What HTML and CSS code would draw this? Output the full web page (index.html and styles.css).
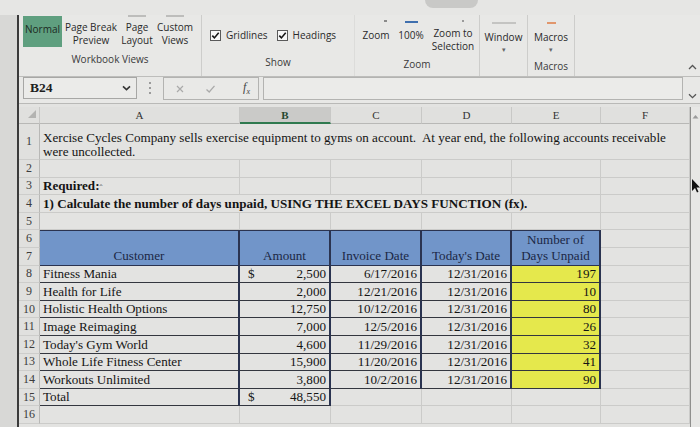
FILE: index.html
```html
<!DOCTYPE html>
<html lang="en">
<head>
<meta charset="utf-8">
<title>Accounts Receivable - Excel</title>
<link rel="stylesheet" href="styles.css">
</head>
<body>
<div class="top"><div class="tabhint"></div></div>
<div class="main">
  <div class="bezel"></div>
  <div class="app">
    <div class="ribbon">
      <div class="group g-views">
        <div class="btns">
          <div class="btn normal">Normal</div>
          <div class="btn w-pb"><span class="ico ico-none"></span>Page Break<br>Preview</div>
          <div class="btn w-pl"><span class="ico ico-dash"></span>Page<br>Layout</div>
          <div class="btn w-cv"><span class="ico ico-dash"></span>Custom<br>Views</div>
        </div>
        <div class="glabel">Workbook Views</div>
      </div>
      <div class="group g-show">
        <div class="btns">
          <label class="chk"><svg width="11" height="11" viewBox="0 0 11 11"><rect x="0.5" y="0.5" width="10" height="10" fill="#f7f7f7" stroke="#5a5a5a"/><path d="M2.3 5.6 L4.4 7.9 L8.7 2.7" fill="none" stroke="#151515" stroke-width="1.6"/></svg><span>Gridlines</span></label>
          <label class="chk"><svg width="11" height="11" viewBox="0 0 11 11"><rect x="0.5" y="0.5" width="10" height="10" fill="#f7f7f7" stroke="#5a5a5a"/><path d="M2.3 5.6 L4.4 7.9 L8.7 2.7" fill="none" stroke="#151515" stroke-width="1.6"/></svg><span>Headings</span></label>
        </div>
        <div class="glabel">Show</div>
      </div>
      <div class="group g-zoom">
        <div class="btns">
          <div class="btn w-z"><span class="ico ico-dot"></span>Zoom</div>
          <div class="btn w-100"><span class="ico ico-blue"></span>100%</div>
          <div class="btn w-zs"><span class="ico ico-dot2"></span>Zoom to<br>Selection</div>
        </div>
        <div class="glabel">Zoom</div>
      </div>
      <div class="group g-window">
        <div class="btns">
          <div class="btn w-win"><span class="ico ico-win"></span>Window<span class="drop">&#9662;</span></div>
        </div>
      </div>
      <div class="group g-macros">
        <div class="btns">
          <div class="btn w-mac"><span class="ico ico-orange"></span>Macros<span class="drop">&#9662;</span></div>
        </div>
        <div class="glabel">Macros</div>
      </div>
      <div class="ribbon-end">
        <svg width="9" height="6" viewBox="0 0 9 6"><path d="M1 5 L4.5 1.5 L8 5" fill="none" stroke="#555" stroke-width="1.3"/></svg>
      </div>
    </div>

    <div class="fbar">
      <div class="namebox"><span>B24</span><svg width="9" height="6" viewBox="0 0 9 6"><path d="M1 1.3 L4.5 4.6 L8 1.3" fill="none" stroke="#333" stroke-width="1.6"/></svg></div>
      <div class="grip"><i></i><i></i><i></i></div>
      <div class="fxbox">
        <svg width="10" height="10" viewBox="0 0 10 10"><path d="M2 2 L8 8 M8 2 L2 8" stroke="#aaa" stroke-width="1.2"/></svg>
        <svg width="11" height="10" viewBox="0 0 11 10"><path d="M1.5 5.5 L4.2 8 L9.5 1.8" fill="none" stroke="#aaa" stroke-width="1.3"/></svg>
        <span class="fx">f<sub>x</sub></span>
      </div>
      <div class="finput"></div>
      <div class="fend"><svg width="9" height="6" viewBox="0 0 9 6"><path d="M1 1.3 L4.5 4.6 L8 1.3" fill="none" stroke="#555" stroke-width="1.3"/></svg></div>
    </div>

    <div class="sheetwrap">
      <div class="sheet">
        <div class="ch corner"><svg width="8" height="8" viewBox="0 0 8 8"><path d="M8 0 L8 8 L0 8 Z" fill="#b3b3b1"/></svg></div>
        <div class="ch">A</div>
        <div class="ch sel">B</div>
        <div class="ch">C</div>
        <div class="ch">D</div>
        <div class="ch">E</div>
        <div class="ch">F</div>

        <div class="rh">1</div>
        <div class="c span6 intro">Xercise Cycles Company sells exercise equipment to gyms on account.&nbsp; At year end, the following accounts receivable<br>were uncollected.</div>

        <div class="rh">2</div>
        <div class="c"></div><div class="c"></div><div class="c"></div><div class="c"></div><div class="c"></div><div class="c"></div>

        <div class="rh">3</div>
        <div class="c bold">Required:<span class="caret">&#710;</span></div>
        <div class="c"></div><div class="c"></div><div class="c"></div><div class="c"></div><div class="c"></div>

        <div class="rh">4</div>
        <div class="c span5 bold">1) Calculate the number of days unpaid, USING THE EXCEL DAYS FUNCTION (fx).</div>
        <div class="c"></div>

        <div class="rh">5</div>
        <div class="c"></div><div class="c"></div><div class="c"></div><div class="c"></div><div class="c"></div><div class="c"></div>

        <div class="c th cA">Customer</div>
        <div class="c th cB">Amount</div>
        <div class="c th cC">Invoice Date</div>
        <div class="c th cD">Today's Date</div>
        <div class="c th cE">Number of<br>Days Unpaid</div>
        <div class="rh">6</div>
        <div class="c"></div>
        <div class="rh">7</div>
        <div class="c"></div>

        <div class="rh">8</div>
        <div class="c td tv">Fitness Mania</div>
        <div class="c td tv amt"><span>$</span><span>2,500</span></div>
        <div class="c td tv num">6/17/2016</div>
        <div class="c td tv num">12/31/2016</div>
        <div class="c td tv num yel">197</div>
        <div class="c"></div>

        <div class="rh">9</div>
        <div class="c td tv">Health for Life</div>
        <div class="c td tv amt"><span></span><span>2,000</span></div>
        <div class="c td tv num">12/21/2016</div>
        <div class="c td tv num">12/31/2016</div>
        <div class="c td tv num yel">10</div>
        <div class="c"></div>

        <div class="rh">10</div>
        <div class="c td tv">Holistic Health Options</div>
        <div class="c td tv amt"><span></span><span>12,750</span></div>
        <div class="c td tv num">10/12/2016</div>
        <div class="c td tv num">12/31/2016</div>
        <div class="c td tv num yel">80</div>
        <div class="c"></div>

        <div class="rh">11</div>
        <div class="c td tv">Image Reimaging</div>
        <div class="c td tv amt"><span></span><span>7,000</span></div>
        <div class="c td tv num">12/5/2016</div>
        <div class="c td tv num">12/31/2016</div>
        <div class="c td tv num yel">26</div>
        <div class="c"></div>

        <div class="rh">12</div>
        <div class="c td tv">Today's Gym World</div>
        <div class="c td tv amt"><span></span><span>4,600</span></div>
        <div class="c td tv num">11/29/2016</div>
        <div class="c td tv num">12/31/2016</div>
        <div class="c td tv num yel">32</div>
        <div class="c"></div>

        <div class="rh">13</div>
        <div class="c td tv">Whole Life Fitness Center</div>
        <div class="c td tv amt"><span></span><span>15,900</span></div>
        <div class="c td tv num">11/20/2016</div>
        <div class="c td tv num">12/31/2016</div>
        <div class="c td tv num yel">41</div>
        <div class="c"></div>

        <div class="rh">14</div>
        <div class="c td tv">Workouts Unlimited</div>
        <div class="c td tv amt"><span></span><span>3,800</span></div>
        <div class="c td tv num">10/2/2016</div>
        <div class="c td tv num">12/31/2016</div>
        <div class="c td tv num yel">90</div>
        <div class="c"></div>

        <div class="rh">15</div>
        <div class="c td tv">Total</div>
        <div class="c td tv amt"><span>$</span><span>48,550</span></div>
        <div class="c"></div><div class="c"></div><div class="c"></div><div class="c"></div>

        <div class="rh">16</div>
        <div class="c"></div><div class="c"></div><div class="c"></div><div class="c"></div><div class="c"></div><div class="c"></div>
      </div>
      <div class="vscroll"><svg width="7" height="5" viewBox="0 0 7 5"><path d="M0.5 4.5 L3.5 1 L6.5 4.5 Z" fill="#9a9a9a"/></svg></div>
    </div>
  </div>
</div>
<svg class="cursor" width="8" height="14" viewBox="0 0 8 14"><path d="M0 0 L0 12 L3 9 L5 13.5 L6.5 12.8 L4.5 8.5 L8 8.5 Z" fill="#111"/></svg>
</body>
</html>
```

FILE: styles.css
```css
* { box-sizing: border-box; margin: 0; padding: 0; }
html, body { width: 700px; height: 427px; overflow: hidden; }
body {
  position: relative;
  background: #e3e3e1;
  font-family: "Liberation Serif", "Times New Roman", serif;
  color: #1c1c1c;
}

.top { height: 15px; background: #e6e6e4; padding-left: 425px; }
.tabhint { width: 53px; height: 8px; background: #c9c9c7; border-radius: 0 0 9px 9px; }

.main { display: flex; height: 412px; }
.bezel { width: 17px; flex: none; background: #d8d8d6; }
.app { flex: 1; display: flex; flex-direction: column; border-left: 2px solid #3a3a3a; min-width: 0; }

/* Ribbon */
.ribbon {
  height: 62px; display: flex; background: #e8e8e6;
  border-bottom: 1px solid #bdbdbb;
  font-family: "Open Sans", "Noto Sans", sans-serif; font-size: 10px; color: #2a2a2a;
}
.group { display: flex; flex-direction: column; align-items: center; border-right: 1px solid #cdcdcb; }
.glabel { line-height: 13px; color: #3a3a3a; white-space: nowrap; }
.btns { display: flex; align-items: flex-start; width: 100%; }
.btn { display: flex; flex-direction: column; align-items: center; text-align: center; line-height: 13px; white-space: nowrap; }
.ico { display: block; height: 2px; flex: none; }

.g-views { width: 183px; }
.g-views .btns { height: 37.5px; padding-left: 4px; }
.normal { width: 39px; height: 31px; margin-top: 1px; background: #5f9f7f; justify-content: center; padding-bottom: 4px; color: #1d2a22; }
.w-pb { width: 56px; margin-left: 1px; }
.w-pl { width: 36px; }
.w-cv { width: 40px; }
.g-views .ico { margin-bottom: 4px; }
.ico-none { width: 1px; }
.ico-dash { width: 18px; background: #bdbdbb; }

.g-show { width: 153px; border-right-color: #dcdcda; }
.g-show .btns { height: 40.5px; padding: 13.5px 0 0 8px; }
.chk { display: flex; align-items: center; gap: 5px; line-height: 13px; }
.chk + .chk { margin-left: 9px; }
.chk svg { display: block; }

.g-zoom { width: 125px; }
.g-zoom .btns { height: 42.5px; padding-left: 5px; }
.w-z { width: 32px; padding-top: 5px; }
.w-z .ico { margin-bottom: 6.5px; }
.ico-dot { width: 3px; background: #8a8a8a; margin-left: 18px; }
.w-100 { width: 38px; padding-top: 6px; }
.w-100 .ico { margin-bottom: 5.5px; }
.ico-blue { width: 13px; background: #3f6fae; }
.w-zs { width: 46px; padding-top: 5px; }
.w-zs .ico { margin-bottom: 4.5px; }
.ico-dot2 { width: 2px; background: #9a9a9a; margin-left: 20px; }

.g-window { width: 48px; }
.g-window .btns, .g-macros .btns { height: 44.5px; }
.w-win, .w-mac { width: 100%; padding-top: 7px; }
.w-win .ico, .w-mac .ico { margin-bottom: 6.5px; }
.ico-win { width: 24px; background: #c4c4c2; }
.ico-orange { width: 9px; background: #e1976d; }
.drop { font-size: 7px; line-height: 9px; color: #666; margin-top: 1px; }
.g-macros { width: 47px; }

.ribbon-end { flex: 1; display: flex; justify-content: flex-end; align-items: flex-start; padding: 49px 3px 0 0; }
.ribbon-end svg { display: block; }

/* Formula bar */
.fbar {
  height: 27px; display: flex; align-items: flex-start; padding: 0 0 0 4px;
  background: #e8e8e6; border-bottom: 1px solid #b9b9b7;
}
.namebox {
  width: 114px; height: 22px; border: 1px solid #a7a7a5; background: #ebebe9;
  display: flex; align-items: center; justify-content: space-between; padding: 0 5px 0 6px;
  font-family: "Liberation Serif", serif; font-size: 13.5px; color: #1e1e1e; font-weight: bold;
}
.namebox svg { display: block; }
.grip { width: 26px; height: 22px; display: flex; flex-direction: column; align-items: center; justify-content: center; gap: 3px; }
.grip i { display: block; width: 2px; height: 2px; background: #9b9b9b; }
.fxbox {
  width: 96px; height: 23px; border: 1px solid #b3b3b1; background: #e9e9e7;
  display: flex; align-items: center; padding: 0 8px 0 11px; justify-content: space-between;
}
.fxbox svg { display: block; }
.fxbox svg + svg { margin-left: 4px; }
.fx { font-family: "Liberation Serif", serif; font-style: italic; font-size: 12px; color: #444; margin-left: 12px; }
.fx sub { font-size: 8px; }
.finput { width: 420px; height: 23px; margin-left: 4px; border: 1px solid #b3b3b1; background: #ebebe9; }
.fend { flex: 1; display: flex; justify-content: flex-end; padding: 16px 3px 0 0; }
.fend svg { display: block; }

/* Sheet */
.sheetwrap { display: flex; margin-top: 3px; flex: 1; min-height: 0; }
.sheet {
  width: 671px; flex: none; display: grid;
  grid-template-columns: 21px 200px 91px 91px 90px 89px 89px;
  grid-template-rows: 17px 36px repeat(15, 17.6px);
  background: #e3e3e1;
}
.ch {
  display: flex; align-items: center; justify-content: center;
  font-size: 11px; color: #333; background: #e0e0de;
  border-right: 1px solid #c8c8c6; border-bottom: 1px solid #b8b8b6;
}
.ch.corner { justify-content: flex-end; align-items: flex-end; padding: 0 3px 5px 0; }
.ch.corner svg { display: block; }
.ch.sel { background: #cacac8; border-bottom: 2px solid #2f7a4f; color: #24472f; font-weight: bold; }
.rh {
  display: flex; align-items: center; justify-content: center;
  font-size: 12px; color: #3c3c3c; background: #e0e0de;
  border-right: 1px solid #b8b8b6; border-bottom: 1px solid #cdcdcb;
}
.c {
  display: flex; align-items: flex-end; padding: 0 3px 1px;
  font-size: 13.1px; line-height: 15px; white-space: nowrap; color: #141414;
  border-right: 1px solid #cbcbc9; border-bottom: 1px solid #cbcbc9;
}
.span6 { grid-column: span 6; }
.span5 { grid-column: span 5; }
.intro { white-space: normal; line-height: 14px; padding-bottom: 0; }
.bold { font-weight: bold; }
.caret { font-weight: normal; font-size: 9px; align-self: flex-start; margin-top: 3px; color: #555; }

.th {
  grid-row: 7 / span 2;
  background: #7195c9; color: #1b2745;
  justify-content: center; text-align: center; line-height: 16px;
  border-right: 2px solid #2a3350; border-bottom: 1px solid #2a3350;
  box-shadow: inset 0 1px 0 #2a3350;
}
.cA { grid-column: 2; }
.cB { grid-column: 3; }
.cC { grid-column: 4; }
.cD { grid-column: 5; }
.cE { grid-column: 6; }

.td { border-bottom: 1px solid #33363f; }
.tv { border-right: 2px solid #2a3350; }
.num { justify-content: flex-end; }
.amt { justify-content: space-between; padding-left: 8px; }
.yel { background: #e5e84c; }

.vscroll { flex: 1; background: #e7e7e5; border-left: 1px solid #8f8f8d; display: flex; justify-content: center; padding-top: 7px; }
.vscroll svg { display: block; }

.cursor { position: absolute; left: 692px; top: 179px; }
```
